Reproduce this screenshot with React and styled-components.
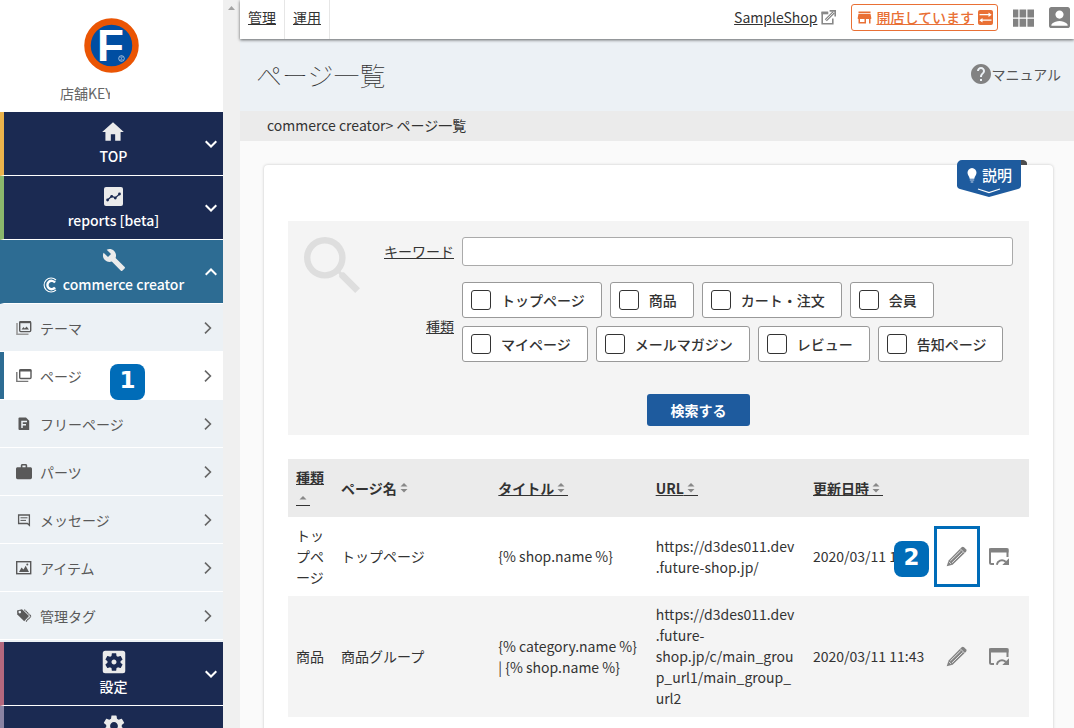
import React from "react";
import styled, { createGlobalStyle } from "styled-components";
import {
  MdHome,
  MdBuild,
  MdSettings,
  MdSettingsApplications,
  MdWork,
  MdStore,
  MdViewModule,
  MdAccountBox,
  MdHelp,
  MdSearch
} from "react-icons/md";

const GlobalStyle = createGlobalStyle`
  * {
    box-sizing: border-box;
  }
  body {
    margin: 0;
    background: #fafafa;
    color: #333;
    font-family: "Noto Sans CJK JP", sans-serif;
    font-size: 14px;
    line-height: 21px;
  }
  button, input {
    font: inherit;
    color: inherit;
  }
  button {
    padding: 0;
    border: 0;
    background: none;
    cursor: pointer;
  }
  a {
    color: inherit;
  }
  svg {
    display: block;
    flex: none;
  }
`;

const Page = styled.div`
  display: flex;
  height: 100vh;
  overflow: hidden;
`;

/* sidebar */

const Sidebar = styled.aside`
  flex: 0 0 240px;
  display: flex;
  background: #f0f0f0;
`;

const SidebarContent = styled.div`
  flex: 1;
  background: #fff;
`;

const ScrollTrack = styled.div`
  flex: 0 0 17px;
  padding: 6px 0 0 5px;
`;

const Brand = styled.div`
  height: 112px;
  padding-top: 18px;
`;

const Logo = styled.svg`
  margin: 0 auto 10px;
`;

const ShopKey = styled.p`
  width: 50px;
  margin: 0 0 0 60px;
  overflow: hidden;
  white-space: nowrap;
  color: #666;
`;

const MenuButton = styled.button`
  width: 100%;
  height: 64px;
  display: grid;
  grid-template-columns: 24px 1fr 24px;
  align-items: center;
  justify-items: center;
  border-left: 4px solid ${props => props.$accent};
  border-bottom: 1px solid #fff;
  background: ${props => (props.$open ? "#2d6c93" : "#1b2a52")};
  color: #fff;
  font-weight: 500;
`;

const MenuLabel = styled.span`
  grid-column: 2;
  display: flex;
  flex-direction: column;
  align-items: center;
  gap: 2px;
  white-space: nowrap;
`;

const MenuIcon = styled.span`
  height: 24px;
  display: flex;
  align-items: center;
  color: #ebebeb;
`;

const MenuText = styled.span`
  min-height: 21px;
  display: flex;
  align-items: center;
  gap: 6px;
`;

const SubMenu = styled.ul`
  margin: 0;
  padding: 0 0 2px;
  background: #ecf1f5;
  list-style: none;
`;

const SubMenuItem = styled.li`
  position: relative;
  border-bottom: 1px solid #fff;
`;

const SubMenuLink = styled.a`
  height: 47px;
  display: flex;
  align-items: center;
  gap: 8px;
  padding: 1px 11px 0 12px;
  border-left: 4px solid ${props => (props.$active ? "#2d6c93" : "#ecf1f5")};
  background: ${props => (props.$active ? "#fff" : "#ecf1f5")};
  color: #595959;
  text-decoration: none;

  span {
    flex: 1;
  }
`;

const Step = styled.b`
  position: absolute;
  z-index: 1;
  width: 35px;
  height: 36px;
  border-radius: 8px;
  background: #006cb8;
  color: #fff;
  font-family: "DejaVu Sans", sans-serif;
  font-size: 23px;
  line-height: 32px;
  text-align: center;
`;

const MenuStep = styled(Step)`
  top: 12px;
  left: 110px;
`;

/* main column */

const Main = styled.main`
  flex: 1;
  min-width: 0;
`;

const TopBar = styled.header`
  position: relative;
  height: 39px;
  display: flex;
  align-items: center;
  background: #fff;
  box-shadow: 0 1px 3px rgba(0, 0, 0, 0.6);
`;

const TopTab = styled.a`
  height: 39px;
  padding: 7px 8px 0;
  border-right: 1px solid #e6e6e6;
`;

const TopTools = styled.div`
  display: flex;
  align-items: center;
  margin-left: auto;
  padding: 0 4px 4px 0;
`;

const ShopLink = styled.a`
  display: flex;
  align-items: center;
  gap: 4px;
  margin-right: 15px;
`;

const OpenStatus = styled.button`
  height: 27px;
  display: flex;
  align-items: center;
  gap: 4px;
  padding: 0 4px 0 5px;
  border: 1px solid #e97035;
  border-radius: 3px;
  color: #e97035;
  font-weight: 500;
  text-decoration: underline;
`;

const ToolButton = styled.button`
  margin-left: 15px;
  color: #828282;
`;

const TitleBar = styled.div`
  height: 72px;
  display: flex;
  align-items: center;
  justify-content: space-between;
  padding: 0 13px 2px 16px;
  background: #ecf1f5;
`;

const Title = styled.h1`
  margin: 0;
  font-size: 26px;
  font-weight: 100;
  line-height: 39px;
`;

const ManualLink = styled.a`
  display: flex;
  align-items: center;
  color: #555;
  text-decoration: none;

  svg {
    color: #828282;
  }
`;

const Breadcrumb = styled.nav`
  padding: 4px 27px 5px;
  background: #ebebeb;
`;

const Card = styled.section`
  position: relative;
  margin: 24px 21px 0 24px;
  padding: 56px 24px 60px;
  border-radius: 4px;
  background: #fff;
  box-shadow: 0 0 3px rgba(0, 0, 0, 0.22);
`;

const HelpButton = styled.button`
  position: absolute;
  top: -5px;
  right: 26px;
  width: 70px;
  height: 37px;
  color: #fff;
  font-size: 15px;
  font-weight: 500;
`;

const HelpShape = styled.svg`
  position: absolute;
  top: 0;
  left: 0;
`;

const HelpText = styled.span`
  position: absolute;
  top: 4px;
  left: 25px;
`;

/* search form */

const SearchForm = styled.form`
  display: flex;
  padding: 16px 16px 9px;
  background: #f4f4f4;
`;

const SearchMark = styled.div`
  flex: 0 0 80px;
  color: #dedede;
`;

const SearchFields = styled.div`
  flex: 1;
`;

const Field = styled.div`
  display: grid;
  grid-template-columns: 70px 1fr;
  gap: 8px;
  align-items: center;
  margin-bottom: 16px;
`;

const FieldLabel = styled.label`
  text-align: right;
  text-decoration: underline;
`;

const TextInput = styled.input`
  width: 100%;
  height: 29px;
  padding: 0 8px;
  border: 1px solid #aaa;
  border-radius: 3px;
  background: #fff;
`;

const Options = styled.div`
  display: flex;
  flex-wrap: wrap;
  gap: 8px;
  padding-bottom: 8px;
`;

const Option = styled.label`
  height: 36px;
  display: flex;
  align-items: center;
  gap: 10px;
  padding: 0 16px 0 8px;
  border: 1px solid #999;
  border-radius: 3px;
  background: #fff;
  font-weight: 500;
`;

const Check = styled.input`
  appearance: none;
  width: 20px;
  height: 20px;
  margin: 0;
  border: 1px solid #333;
  border-radius: 3px;

  &:checked {
    background: #1e5b9e;
  }
`;

const SearchButton = styled.button`
  display: block;
  width: 103px;
  height: 32px;
  margin: 24px auto 0;
  border-radius: 3px;
  background: #1e5b9e;
  color: #fff;
  font-weight: 700;
`;

const Actions = styled.div`
  margin: 0 -16px;
`;

/* result table */

const Table = styled.table`
  width: 100%;
  margin-top: 24px;
  border-collapse: collapse;
  table-layout: fixed;
`;

const HeadCell = styled.th`
  width: ${props => props.$width || "auto"};
  padding: 8px;
  background: #ebebeb;
  font-weight: 700;
  text-align: left;
`;

const SortButton = styled.button`
  display: block;
  text-align: left;
  text-decoration: ${props => (props.$plain ? "none" : "underline")};
  font-weight: 700;
`;

const SortMark = styled.span`
  display: inline-block;
  width: 14px;
  height: 15px;
  padding: 2px 0 0 3px;
  vertical-align: -2px;
  border-bottom: 1px solid ${props => (props.$plain ? "transparent" : "#333")};
`;

const Row = styled.tr`
  background: ${props => (props.$striped ? "#f4f4f4" : "#fff")};
`;

const Cell = styled.td`
  position: relative;
  padding: 8px;
  word-break: ${props => (props.$breakAll ? "break-word" : "normal")};
`;

const IconButton = styled.button`
  display: block;
  margin: ${props => (props.$center ? "0 auto" : "0")};
  color: #828282;
`;

const Highlight = styled.div`
  position: absolute;
  inset: 9px 0;
  border: 3px solid #006cb8;
  pointer-events: none;
`;

const RowStep = styled(Step)`
  top: 24px;
  left: -40px;
`;

/* icons */

const Chevron = ({ up }) => (
  <svg width="12" height="8" viewBox="0 0 12 8" fill="none" stroke="#fff" strokeWidth="2">
    <path d={up ? "M.7 6.8 6 1.5l5.3 5.3" : "M.7 1.2 6 6.5l5.3-5.3"} />
  </svg>
);

const ChevronRight = () => (
  <svg width="8" height="12" viewBox="0 0 8 12" fill="none" stroke="#666" strokeWidth="1.6">
    <path d="m1 .6 5.4 5.4L1 11.4" />
  </svg>
);

const ReportIcon = () => (
  <svg width="19" height="19" viewBox="0 0 19 19">
    <rect width="19" height="19" rx="2" fill="currentColor" />
    <path d="m3.5 13 4.2-3.7 3.6 1.6L15.6 7" fill="none" stroke="#1b2a52" strokeWidth="1.2" />
    <g fill="#1b2a52">
      <circle cx="3.6" cy="13" r="1.4" />
      <circle cx="7.7" cy="9.4" r="1.4" />
      <circle cx="11.3" cy="11" r="1.4" />
      <circle cx="15.5" cy="7" r="1.4" />
    </g>
  </svg>
);

const CreatorIcon = () => (
  <svg width="14" height="16" viewBox="0 0 14 16" fill="none" stroke="#fff">
    <path d="M13 3A7 7 0 1 0 13 13" strokeWidth="1.1" />
    <path d="M12 5.500A4.200 4.200 0 1 0 12 10.500" strokeWidth="2.4" />
  </svg>
);

const SubIcon = ({ children }) => (
  <svg width="16" height="16" viewBox="0 0 16 16" fill="none" stroke="#595959">
    {children}
  </svg>
);

const ThemeIcon = () => (
  <SubIcon>
    <path d="M1 3v11.3h11.5" stroke="#999" strokeWidth="1.6" />
    <rect x="3.7" y="1.8" width="11" height="9.8" rx="1" strokeWidth="1.4" />
    <path d="M3.5 2.2h11.4" strokeWidth="2" />
    <path d="m5.500 9.500 2-2.400 1.300 1.300 1.800-1.900 2.400 3z" fill="#595959" stroke="none" />
  </SubIcon>
);

const PagesIcon = () => (
  <SubIcon>
    <path d="M.8 4v9.4h11.5" stroke="#777" strokeWidth="1.4" />
    <rect x="3.7" y="1.8" width="11.3" height="8.7" rx="1" strokeWidth="1.4" />
    <path d="M3.5 2.5h11.8" strokeWidth="2" />
  </SubIcon>
);

const FreePageIcon = () => (
  <SubIcon>
    <path d="M3.500 1.500h6.500l3.200 3.200v9.300H3.500a1 1 0 0 1-1-1V2.500a1 1 0 0 1 1-1z" fill="#595959" stroke="none" />
    <path d="M6 12V5.600h5M6 8.700h4" stroke="#ecf1f5" strokeWidth="1.5" />
  </SubIcon>
);

const MessageIcon = () => (
  <SubIcon>
    <path d="M2.600 3h10.800v10.300l-2-1.800H2.600z" strokeWidth="1.3" />
    <path d="M4.500 5.800h7M4.500 8.400h5.500" />
  </SubIcon>
);

const ItemIcon = () => (
  <SubIcon>
    <rect x=".7" y="1.7" width="14" height="12" strokeWidth="1.4" />
    <path d="m3 12 2.500-4.400 2 2 2.200-3.800L13 12z" fill="#595959" stroke="none" />
    <circle cx="11.3" cy="4.6" r="1" fill="#595959" stroke="none" />
  </SubIcon>
);

const TagIcon = () => (
  <SubIcon>
    <path d="M1 2.400 6 1.200l7 6.800-4.800 5.200L1.300 6.600z" fill="#595959" stroke="none" />
    <path d="m8.300 1.600 6.700 6.600-5 5.300" strokeWidth="1.2" strokeDasharray="1.5 .4" />
    <circle cx="3.8" cy="4.1" r="1.3" fill="#ecf1f5" stroke="none" />
  </SubIcon>
);

const ExternalIcon = () => (
  <svg width="15" height="15" viewBox="0 0 15 15" fill="none" stroke="#888">
    <path d="M7 2.500H1.200v11.300h10.600V8.500" strokeWidth="1.6" />
    <path d="M.5 3h6.800" strokeWidth="2.6" />
    <path d="m4.800 10.200 8-8" strokeWidth="3" />
    <path d="m5.200 9.800 7.600-7.600" stroke="#fff" strokeWidth=".8" />
    <path d="M8.600.9h5.600v5.500" strokeWidth="1.6" />
  </svg>
);

const SwapIcon = () => (
  <svg width="15" height="15" viewBox="0 0 15 15">
    <rect width="15" height="15" rx="2" fill="currentColor" />
    <path d="M1.500 4.700h9.500M4 10.200h9.500" stroke="#fff" strokeWidth="1.3" />
    <path d="m10.500 2.500 3.200 2.200-3.200 2.200zM4.500 8v4.400L1.300 10.200z" fill="#fff" />
  </svg>
);

const PencilIcon = () => (
  <svg width="22" height="21" viewBox="0 0 22 21">
    <path
      d="M15.600 1.300a1.700 1.700 0 0 1 2.400 0l2 2a1.700 1.700 0 0 1 0 2.400L6.600 18.800.7 20.300l1.900-5.700z"
      fill="currentColor"
    />
    <path
      d="M4.300 14.900 14.700 4.700M6.100 16.800 16.600 6.500"
      stroke="#fff"
      strokeWidth=".8"
      fill="none"
    />
    <path d="m14.200 2.700 4.600 4.600M2.900 15.800l2.300 2.300" stroke="#fff" strokeWidth=".7" />
  </svg>
);

const PreviewIcon = () => (
  <svg width="22" height="19" viewBox="0 0 22 19" fill="none" stroke="currentColor">
    <path d="M6 17H3.500A1.500 1.500 0 0 1 2 15.500V2.500h17.500V10" strokeWidth="2" />
    <path d="M3 1h15.500a2 2 0 0 1 2 2v2.500H1V3a2 2 0 0 1 2-2z" fill="currentColor" stroke="none" />
    <path d="M8.800 17.800c.7-3.800 5-6.200 9-3" strokeWidth="2" />
    <path d="M21 11.300v6.700h-6.700z" fill="currentColor" stroke="none" />
  </svg>
);

const Arrows = ({ up }) => (
  <svg width="8" height="10" viewBox="0 0 8 10" fill="#888">
    <path d={up ? "M4 3 .5 6.500h7z" : "M4 0 .5 3.500h7z"} />
    {!up && <path d="m4 9.500 3.500-3.500h-7z" />}
  </svg>
);

/* data */

const subMenu = [
  { label: "テーマ", icon: <ThemeIcon /> },
  { label: "ページ", icon: <PagesIcon />, active: true },
  { label: "フリーページ", icon: <FreePageIcon /> },
  { label: "パーツ", icon: <MdWork size={16} viewBox="2 2 20 20" color="#595959" /> },
  { label: "メッセージ", icon: <MessageIcon /> },
  { label: "アイテム", icon: <ItemIcon /> },
  { label: "管理タグ", icon: <TagIcon /> }
];

const kinds = [
  "トップページ",
  "商品",
  "カート・注文",
  "会員",
  "マイページ",
  "メールマガジン",
  "レビュー",
  "告知ページ"
];

const columns = [
  { label: "種類", width: "45px", up: true },
  { label: "ページ名", plain: true },
  { label: "タイトル" },
  { label: "URL" },
  { label: "更新日時", width: "129px" }
];

const pages = [
  {
    kind: "トップページ",
    name: "トップページ",
    title: "{% shop.name %}",
    url: "https://d3des011.dev.future-shop.jp/",
    date: "2020/03/11 11:43",
    step: "2"
  },
  {
    kind: "商品",
    name: "商品グループ",
    title: "{% category.name %} | {% shop.name %}",
    url: "https://d3des011.dev.future-shop.jp/c/main_group_url1/main_group_url2",
    date: "2020/03/11 11:43"
  }
];

const MenuItem = ({ accent, icon, text, mark, open }) => (
  <MenuButton type="button" $accent={accent} $open={open}>
    <MenuLabel>
      <MenuIcon>{icon}</MenuIcon>
      <MenuText>
        {mark}
        {text}
      </MenuText>
    </MenuLabel>
    <Chevron up={open} />
  </MenuButton>
);

const SideMenu = () => (
  <Sidebar>
    <SidebarContent>
      <Brand>
        <Logo width="55" height="55" viewBox="0 0 55 55">
          <circle cx="27.5" cy="27.5" r="24" fill="#004ea2" stroke="#ea5504" strokeWidth="6.5" />
          <text x="13" y="43" fill="#fff" fontFamily="Liberation Sans, sans-serif" fontWeight="700" fontSize="44">
            F
          </text>
          <circle cx="37.5" cy="40.5" r="2.8" fill="none" stroke="#c5d5ea" strokeWidth=".8" />
          <path d="M38.700 39.300c-1.500-.9-2.600.4-1.200 1.200s.4 2.100-1.200 1.200" fill="none" stroke="#c5d5ea" strokeWidth=".7" />
        </Logo>
        <ShopKey>店舗KEY</ShopKey>
      </Brand>
      <MenuItem accent="#ebb34c" icon={<MdHome size={26} />} text="TOP" />
      <MenuItem accent="#8ab76c" icon={<ReportIcon />} text="reports [beta]" />
      <MenuItem
        accent="#2d6c93"
        icon={<MdBuild size={24} />}
        text="commerce creator"
        mark={<CreatorIcon />}
        open
      />
      <SubMenu>
        {subMenu.map(item => (
          <SubMenuItem key={item.label}>
            <SubMenuLink href="#" $active={item.active}>
              {item.icon}
              <span>{item.label}</span>
              <ChevronRight />
            </SubMenuLink>
            {item.active && <MenuStep>1</MenuStep>}
          </SubMenuItem>
        ))}
      </SubMenu>
      <MenuItem accent="#b4687e" icon={<MdSettingsApplications size={30} />} text="設定" />
      <MenuItem accent="#8a83a3" icon={<MdSettings size={26} />} />
    </SidebarContent>
    <ScrollTrack>
      <svg width="7" height="4" viewBox="0 0 7 4">
        <path d="M3.500 0 7 4H0z" fill="#a3a3a3" />
      </svg>
    </ScrollTrack>
  </Sidebar>
);

const SearchPanel = () => (
  <SearchForm>
    <SearchMark>
      <MdSearch size={56} viewBox="3 3 17.5 17.5" />
    </SearchMark>
    <SearchFields>
      <Field>
        <FieldLabel htmlFor="keyword">キーワード</FieldLabel>
        <TextInput id="keyword" type="text" />
      </Field>
      <Field>
        <FieldLabel as="span" id="kind">種類</FieldLabel>
        <Options role="group" aria-labelledby="kind">
          {kinds.map(kind => (
            <Option key={kind}>
              <Check type="checkbox" />
              {kind}
            </Option>
          ))}
        </Options>
      </Field>
      <Actions>
        <SearchButton type="button">検索する</SearchButton>
      </Actions>
    </SearchFields>
  </SearchForm>
);

const PageTable = () => (
  <Table>
    <thead>
      <tr>
        {columns.map(column => (
          <HeadCell key={column.label} $width={column.width}>
            <SortButton type="button" $plain={column.plain}>
              {column.label}
              <SortMark $plain={column.plain}>
                <Arrows up={column.up} />
              </SortMark>
            </SortButton>
          </HeadCell>
        ))}
        <HeadCell $width="46px" />
        <HeadCell $width="49px" />
      </tr>
    </thead>
    <tbody>
      {pages.map((page, index) => (
        <Row key={page.kind} $striped={index % 2 === 1}>
          <Cell>{page.kind}</Cell>
          <Cell>{page.name}</Cell>
          <Cell>{page.title}</Cell>
          <Cell $breakAll>{page.url}</Cell>
          <Cell>{page.date}</Cell>
          <Cell>
            <IconButton type="button" aria-label="編集" $center>
              <PencilIcon />
            </IconButton>
            {page.step && <Highlight />}
            {page.step && <RowStep>{page.step}</RowStep>}
          </Cell>
          <Cell>
            <IconButton type="button" aria-label="プレビュー">
              <PreviewIcon />
            </IconButton>
          </Cell>
        </Row>
      ))}
    </tbody>
  </Table>
);

const App = () => (
  <Page>
    <GlobalStyle />
    <SideMenu />
    <Main>
      <TopBar>
        <TopTab href="#">管理</TopTab>
        <TopTab href="#">運用</TopTab>
        <TopTools>
          <ShopLink href="#">
            SampleShop
            <ExternalIcon />
          </ShopLink>
          <OpenStatus type="button">
            <MdStore size={15} viewBox="2 2 20 20" />
            開店しています
            <SwapIcon />
          </OpenStatus>
          <ToolButton type="button" aria-label="アプリ">
            <MdViewModule size={21} viewBox="4 3 17 17" />
          </ToolButton>
          <ToolButton type="button" aria-label="アカウント">
            <MdAccountBox size={21} viewBox="3 3 18 18" />
          </ToolButton>
        </TopTools>
      </TopBar>
      <TitleBar>
        <Title>ページ一覧</Title>
        <ManualLink href="#">
          <MdHelp size={20} viewBox="2 2 20 20" />
          マニュアル
        </ManualLink>
      </TitleBar>
      <Breadcrumb>commerce creator&gt; ページ一覧</Breadcrumb>
      <Card>
        <HelpButton type="button">
          <HelpShape width="70" height="37" viewBox="0 0 70 37">
            <path d="M62 0h4a4 4 0 0 1 4 5h-8z" fill="#4d4d4d" />
            <path d="M5 0h59v25a4 4 0 0 1-3 4L32 37 3 29a4 4 0 0 1-3-4V5a5 5 0 0 1 5-5z" fill="#1e5b9e" />
            <path d="M15 8a4.700 4.700 0 0 1 4.500 4.700c0 2.500-1.900 3.300-2.200 6h-4.600c-.3-2.700-2.200-3.500-2.200-6A4.700 4.700 0 0 1 15 8z" fill="#fff" />
            <path d="M12.800 20h4.400M13.700 22h2.600" stroke="#c5d5ea" strokeWidth="1.2" />
            <path d="m21 29 11 3.500L43 29" fill="none" stroke="#fff" strokeWidth="1.3" />
          </HelpShape>
          <HelpText>説明</HelpText>
        </HelpButton>
        <SearchPanel />
        <PageTable />
      </Card>
    </Main>
  </Page>
);

export default App;
